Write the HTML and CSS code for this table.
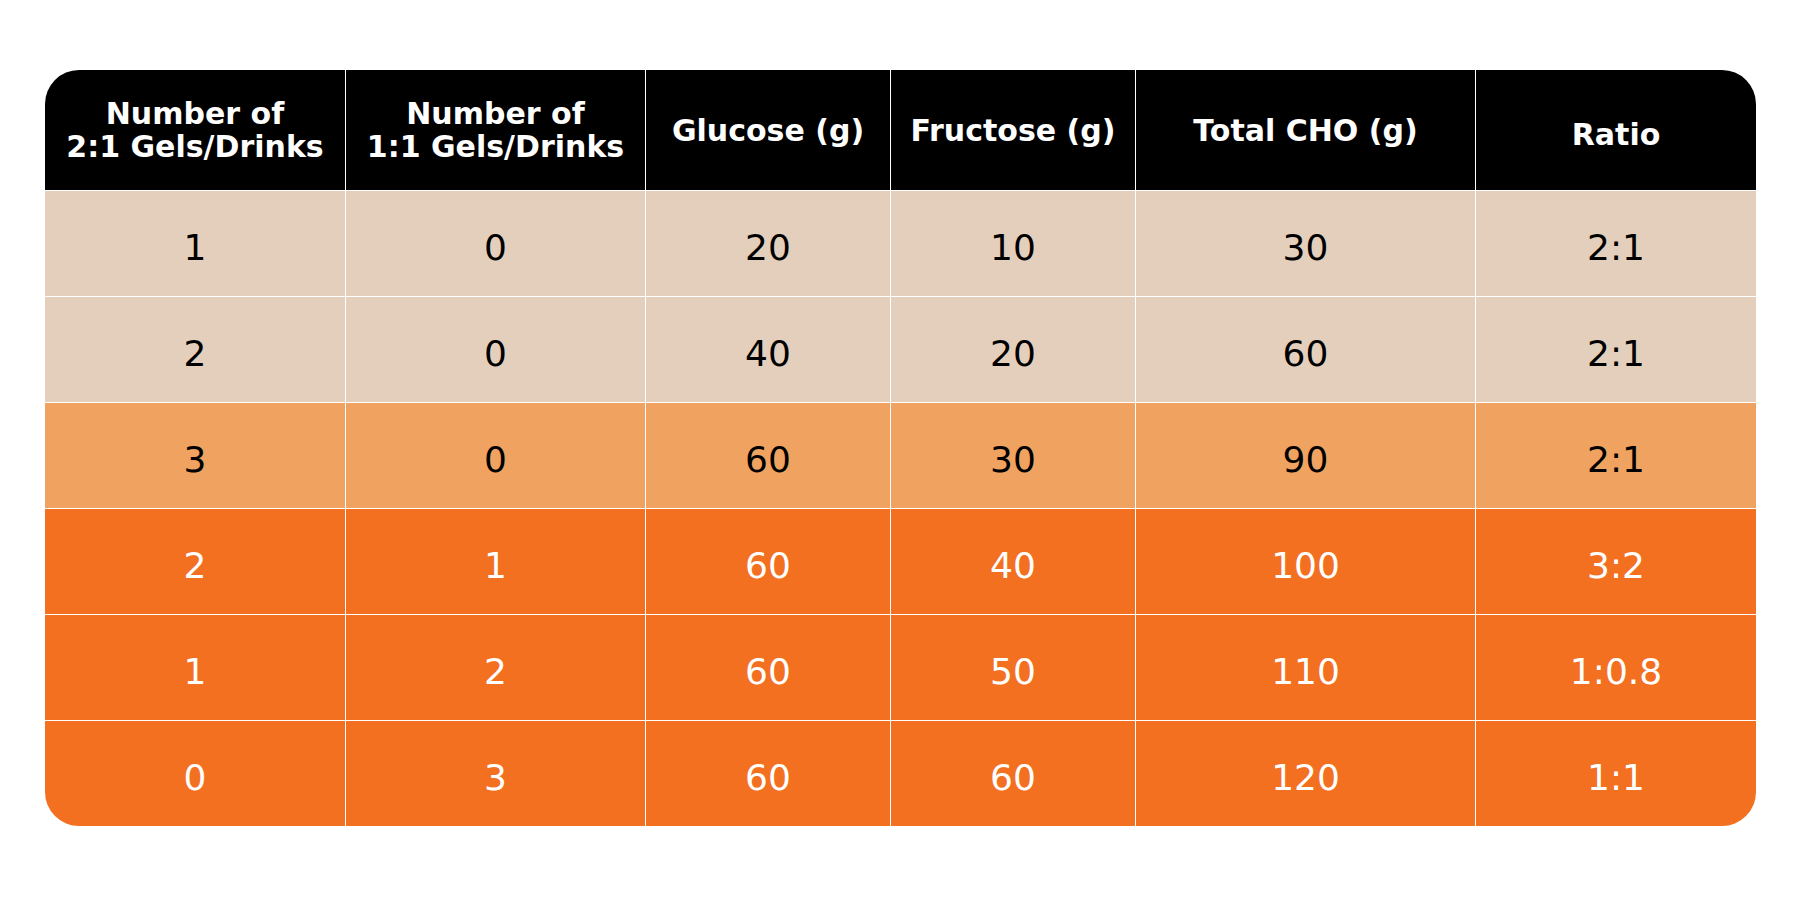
FILE: index.html
```html
<!DOCTYPE html>
<html>
<head>
<meta charset="utf-8">
<link rel="stylesheet" href="styles.css">
</head>
<body>
<div class="page">
  <div class="table">
    <div class="cell head">Number of<br>2:1 Gels/Drinks</div>
    <div class="cell head">Number of<br>1:1 Gels/Drinks</div>
    <div class="cell head">Glucose (g)</div>
    <div class="cell head">Fructose (g)</div>
    <div class="cell head">Total CHO (g)</div>
    <div class="cell head ratio">Ratio</div>

    <div class="cell beige">1</div><div class="cell beige">0</div><div class="cell beige">20</div><div class="cell beige">10</div><div class="cell beige">30</div><div class="cell beige">2:1</div>
    <div class="cell beige">2</div><div class="cell beige">0</div><div class="cell beige">40</div><div class="cell beige">20</div><div class="cell beige">60</div><div class="cell beige">2:1</div>
    <div class="cell light">3</div><div class="cell light">0</div><div class="cell light">60</div><div class="cell light">30</div><div class="cell light">90</div><div class="cell light">2:1</div>
    <div class="cell orange">2</div><div class="cell orange">1</div><div class="cell orange">60</div><div class="cell orange">40</div><div class="cell orange">100</div><div class="cell orange">3:2</div>
    <div class="cell orange">1</div><div class="cell orange">2</div><div class="cell orange">60</div><div class="cell orange">50</div><div class="cell orange">110</div><div class="cell orange">1:0.8</div>
    <div class="cell orange">0</div><div class="cell orange">3</div><div class="cell orange">60</div><div class="cell orange">60</div><div class="cell orange">120</div><div class="cell orange">1:1</div>
  </div>
</div>
</body>
</html>
```

FILE: styles.css
```css
html, body {
  margin: 0;
  padding: 0;
  background: #ffffff;
}

.page {
  width: 1800px;
  height: 900px;
  padding: 70px 0 0 45px;
  box-sizing: border-box;
  font-family: "DejaVu Sans", Verdana, sans-serif;
}

.table {
  display: grid;
  grid-template-columns: 300px 299px 244px 244px 339px 280px;
  grid-template-rows: 120px repeat(6, 105px);
  gap: 1px;
  width: 1711px;
  background: #ffffff;
  border-radius: 34px;
  overflow: hidden;
}

.cell {
  display: flex;
  align-items: center;
  justify-content: center;
  text-align: center;
  font-size: 36px;
  padding-top: 8px;
  box-sizing: border-box;
}

.head {
  background: #000000;
  color: #ffffff;
  font-weight: bold;
  font-size: 30px;
  line-height: 33px;
  padding-top: 0;
}

.head.ratio {
  padding-top: 8px;
}

.beige {
  background: #e4cfbc;
  color: #000000;
}

.light {
  background: #f0a360;
  color: #000000;
}

.orange {
  background: #f37021;
  color: #ffffff;
}
```
